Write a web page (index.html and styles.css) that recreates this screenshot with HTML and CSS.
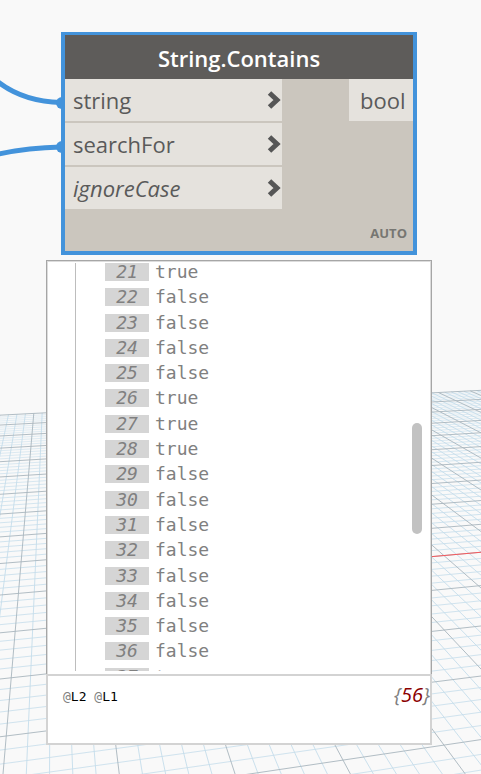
FILE: index.html
```html
<!DOCTYPE html>
<html lang="en">
<head>
<meta charset="utf-8">
<title>String.Contains</title>
<link rel="stylesheet" href="styles.css">
</head>
<body>
<svg class="ground" id="ground" viewBox="0 0 481 774" preserveAspectRatio="xMidYMid slice" aria-hidden="true"></svg>
<svg class="wires" width="70" height="170" aria-hidden="true">
  <path d="M-8 77C12 95 34 102 61 102.500"/>
  <path d="M-6 155C18 149.500 38 147.500 61 147"/>
  <circle cx="62" cy="103" r="6"/>
  <circle cx="62" cy="147" r="6"/>
</svg>
<main class="workspace">
  <section class="node">
    <h1 class="node-title">String.Contains</h1>
    <div class="ports">
      <ul class="inputs">
        <li class="port">string<svg class="chevron" viewBox="0 0 14 20"><path d="M2.500 3L10 10L2.500 17"/></svg></li>
        <li class="port">searchFor<svg class="chevron" viewBox="0 0 14 20"><path d="M2.500 3L10 10L2.500 17"/></svg></li>
        <li class="port optional">ignoreCase<svg class="chevron" viewBox="0 0 14 20"><path d="M2.500 3L10 10L2.500 17"/></svg></li>
      </ul>
      <div class="port output">bool</div>
    </div>
    <div class="lacing">AUTO</div>
  </section>
  <section class="preview">
    <div class="values">
      <ol class="list">
        <li><i>21</i>true</li>
        <li><i>22</i>false</li>
        <li><i>23</i>false</li>
        <li><i>24</i>false</li>
        <li><i>25</i>false</li>
        <li><i>26</i>true</li>
        <li><i>27</i>true</li>
        <li><i>28</i>true</li>
        <li><i>29</i>false</li>
        <li><i>30</i>false</li>
        <li><i>31</i>false</li>
        <li><i>32</i>false</li>
        <li><i>33</i>false</li>
        <li><i>34</i>false</li>
        <li><i>35</i>false</li>
        <li><i>36</i>false</li>
        <li><i>37</i>true</li>
      </ol>
      <div class="thumb"></div>
    </div>
    <footer class="summary">
      <div class="levels"><span>@</span>L2 <span>@</span>L1</div>
      <div class="count"><span>{</span>56<span>}</span></div>
    </footer>
  </section>
</main>
<script src="grid.js"></script>
</body>
</html>
```
FILE: styles.css
```css
* { box-sizing: border-box; }
body {
  margin: 0;
  min-height: 100vh;
  position: relative;
  overflow: hidden;
  background: #f9f9f9;
  font-family: "Open Sans", sans-serif;
}
ul, ol { list-style: none; margin: 0; padding: 0; }
.ground { position: absolute; inset: 0; width: 100%; height: 100%; }
.ground line { stroke-width: 1; }
.ground .minor { stroke: #c6deec; }
.ground .major { stroke: #aab7bf; }
.ground .axis { stroke: #f4595d; }
.wires { position: absolute; left: 0; top: 0; }
.wires path { fill: none; stroke: #4393db; stroke-width: 5; }
.wires circle { fill: #4393db; }
.workspace { position: relative; padding: 32px 49px 29px 46px; }
.node {
  margin: 0 15px;
  border: 4px solid #4393db;
  border-top-width: 3px;
  background: #cbc6be;
  color: #5a5a5a;
}
.node-title {
  margin: 0;
  height: 44px;
  background: #5e5c5a;
  color: #fff;
  font-size: 22px;
  font-weight: 600;
  line-height: 46px;
  text-align: center;
}
.ports { display: flex; justify-content: space-between; align-items: flex-start; }
.inputs { display: grid; gap: 2px; width: 217px; }
.port {
  display: flex;
  justify-content: space-between;
  align-items: center;
  height: 42px;
  padding: 0 1px 0 8px;
  background: #e5e2dd;
  font-size: 22px;
}
.optional { font-style: italic; }
.output { width: 64px; padding: 0 8px 0 11px; }
.chevron { width: 14px; height: 20px; }
.chevron path { fill: none; stroke: #565656; stroke-width: 5; }
.lacing {
  height: 42px;
  padding: 0 6px;
  font-size: 13px;
  font-weight: 700;
  line-height: 48px;
  text-align: right;
  color: #777672;
}
.preview { margin-top: 5px; background: #fff; }
.values {
  position: relative;
  height: 414px;
  padding: 2px 0 0 28px;
  border: 1px solid #a6a6a6;
  border-bottom: 0;
  box-shadow: inset 1px 1px #dcdcdc, inset -1px 0 #dcdcdc;
  overflow: hidden;
  font-family: "DejaVu Sans Mono", monospace;
  font-size: 18px;
  color: #808080;
}
.list {
  display: grid;
  grid-auto-rows: 1fr;
  height: 430px;
  padding-left: 29px;
  border-left: 1px solid #bdbdbd;
}
.list li { display: flex; gap: 6px; line-height: 18px; align-items: flex-start; }
.list i { width: 44px; height: 18px; background: #d5d5d5; text-align: center; }
.values::after {
  content: "";
  position: absolute;
  left: 2px;
  right: 2px;
  bottom: 0;
  height: 3px;
  background: #fff;
}
.thumb {
  position: absolute;
  right: 9px;
  top: 162px;
  width: 10px;
  height: 111px;
  border-radius: 5px;
  background: #c2c2c2;
}
.summary {
  display: flex;
  justify-content: space-between;
  height: 71px;
  padding: 5px 0 0 15px;
  border: 2px solid #d3d3d3;
  line-height: 28px;
}
.levels { padding-top: 2px; font-family: "DejaVu Sans Mono", monospace; font-size: 13px; color: #000; }
.count { font-size: 20px; font-style: italic; color: #8b0000; }
.summary span { color: #808080; }
```
FILE: grid.js
```js
// Perspective ground grid: every fifth line is a major one.
const ground = document.getElementById("ground");
const FAR = 13;
const leftY = n => 217.5 + 4149 / (n + 7.99);
const rightY = n => 207 + 3968 / (n + 8.35);
const slope = n => (rightY(n) - leftY(n)) / 432;

function line(x1, y1, x2, y2, kind, opacity) {
  const el = document.createElementNS("http://www.w3.org/2000/svg", "line");
  Object.entries({ x1, y1, x2, y2, opacity, class: kind }).forEach(([k, v]) => el.setAttribute(k, v));
  ground.appendChild(el);
}

function across(i) {
  const n = i / 5;
  const fade = i % 5 ? Math.min(0.8, 1 - n / 22) : 0.9;
  line(0, leftY(n), 481, leftY(n) + slope(n) * 481, i % 5 ? "minor" : "major", fade);
}

function along(i) {
  const k = i / 5;
  const vx = 51, vy = 212;
  const foot = 3 + 116.5 * k / (1 + 0.002 * k);
  const run = (foot - vx) / (774 - vy);
  const m = slope(FAR);
  const top = (leftY(FAR) + m * (vx - run * vy)) / (1 - m * run);
  line(vx + run * (top - vy), top, foot, 774, i % 5 ? "minor" : "major", 0.9);
}

for (let i = -14; i <= FAR * 5; i++) if (i % 5) across(i);
for (let i = -8; i <= 72; i++) if (i % 5) along(i);
for (let i = -10; i <= FAR * 5; i += 5) across(i);
for (let i = -5; i <= 70; i += 5) along(i);
line(240, leftY(3) + slope(3) * 240, 481, leftY(3) + slope(3) * 481, "axis", 1);
```
